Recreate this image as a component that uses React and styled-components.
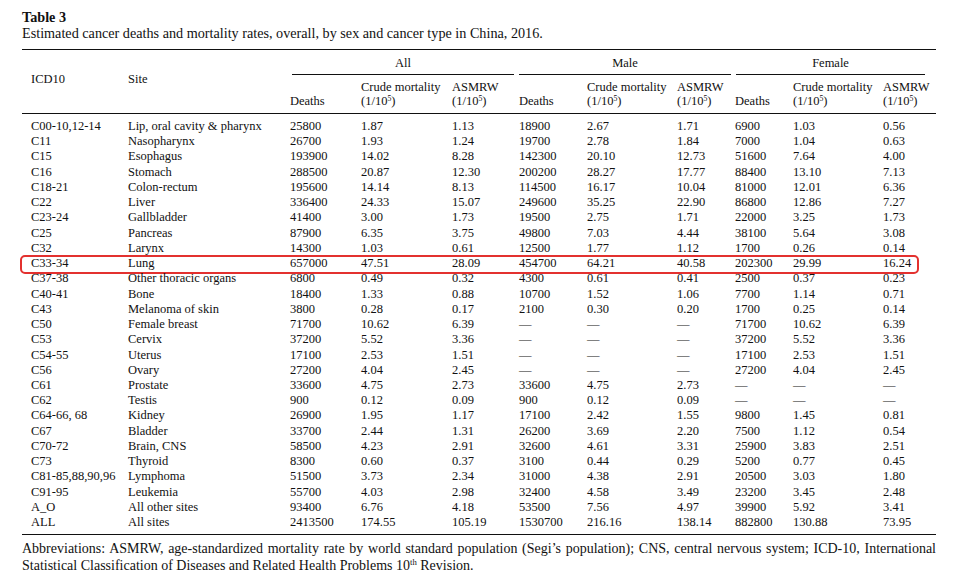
import React from "react";
import styled, { createGlobalStyle } from "styled-components";

const GlobalStyle = createGlobalStyle`
  html, body {
    margin: 0;
    padding: 0;
    background: #fff;
  }
  body {
    font-family: "Liberation Serif", "Times New Roman", serif;
    color: #111;
  }
`;

const rows = [
  ["C00-10,12-14", "Lip, oral cavity & pharynx", "25800", "1.87", "1.13", "18900", "2.67", "1.71", "6900", "1.03", "0.56"],
  ["C11", "Nasopharynx", "26700", "1.93", "1.24", "19700", "2.78", "1.84", "7000", "1.04", "0.63"],
  ["C15", "Esophagus", "193900", "14.02", "8.28", "142300", "20.10", "12.73", "51600", "7.64", "4.00"],
  ["C16", "Stomach", "288500", "20.87", "12.30", "200200", "28.27", "17.77", "88400", "13.10", "7.13"],
  ["C18-21", "Colon-rectum", "195600", "14.14", "8.13", "114500", "16.17", "10.04", "81000", "12.01", "6.36"],
  ["C22", "Liver", "336400", "24.33", "15.07", "249600", "35.25", "22.90", "86800", "12.86", "7.27"],
  ["C23-24", "Gallbladder", "41400", "3.00", "1.73", "19500", "2.75", "1.71", "22000", "3.25", "1.73"],
  ["C25", "Pancreas", "87900", "6.35", "3.75", "49800", "7.03", "4.44", "38100", "5.64", "3.08"],
  ["C32", "Larynx", "14300", "1.03", "0.61", "12500", "1.77", "1.12", "1700", "0.26", "0.14"],
  ["C33-34", "Lung", "657000", "47.51", "28.09", "454700", "64.21", "40.58", "202300", "29.99", "16.24"],
  ["C37-38", "Other thoracic organs", "6800", "0.49", "0.32", "4300", "0.61", "0.41", "2500", "0.37", "0.23"],
  ["C40-41", "Bone", "18400", "1.33", "0.88", "10700", "1.52", "1.06", "7700", "1.14", "0.71"],
  ["C43", "Melanoma of skin", "3800", "0.28", "0.17", "2100", "0.30", "0.20", "1700", "0.25", "0.14"],
  ["C50", "Female breast", "71700", "10.62", "6.39", "—", "—", "—", "71700", "10.62", "6.39"],
  ["C53", "Cervix", "37200", "5.52", "3.36", "—", "—", "—", "37200", "5.52", "3.36"],
  ["C54-55", "Uterus", "17100", "2.53", "1.51", "—", "—", "—", "17100", "2.53", "1.51"],
  ["C56", "Ovary", "27200", "4.04", "2.45", "—", "—", "—", "27200", "4.04", "2.45"],
  ["C61", "Prostate", "33600", "4.75", "2.73", "33600", "4.75", "2.73", "—", "—", "—"],
  ["C62", "Testis", "900", "0.12", "0.09", "900", "0.12", "0.09", "—", "—", "—"],
  ["C64-66, 68", "Kidney", "26900", "1.95", "1.17", "17100", "2.42", "1.55", "9800", "1.45", "0.81"],
  ["C67", "Bladder", "33700", "2.44", "1.31", "26200", "3.69", "2.20", "7500", "1.12", "0.54"],
  ["C70-72", "Brain, CNS", "58500", "4.23", "2.91", "32600", "4.61", "3.31", "25900", "3.83", "2.51"],
  ["C73", "Thyroid", "8300", "0.60", "0.37", "3100", "0.44", "0.29", "5200", "0.77", "0.45"],
  ["C81-85,88,90,96", "Lymphoma", "51500", "3.73", "2.34", "31000", "4.38", "2.91", "20500", "3.03", "1.80"],
  ["C91-95", "Leukemia", "55700", "4.03", "2.98", "32400", "4.58", "3.49", "23200", "3.45", "2.48"],
  ["A_O", "All other sites", "93400", "6.76", "4.18", "53500", "7.56", "4.97", "39900", "5.92", "3.41"],
  ["ALL", "All sites", "2413500", "174.55", "105.19", "1530700", "216.16", "138.14", "882800", "130.88", "73.95"],
];

const colWidths = [106, 162, 71, 91, 67, 68, 90, 58, 58, 90, 53];

const groups = [
  { label: "All", l: 2, r: 5 },
  { label: "Male", l: 0, r: 4 },
  { label: "Female", l: 1, r: 11 },
];

export default function App() {
  return (
    <>
      <GlobalStyle />
      <Page>
        <Title>Table 3</Title>
        <Caption>
          Estimated cancer deaths and mortality rates, overall, by sex and cancer type in China, 2016.
        </Caption>
        <Table>
          <colgroup>
            {colWidths.map((w, i) => (
              <col key={i} style={{ width: w }} />
            ))}
          </colgroup>
          <thead>
            <tr>
              <StubHead rowSpan={2} $first>ICD10</StubHead>
              <StubHead rowSpan={2}>Site</StubHead>
              {groups.map((g) => (
                <GroupHead key={g.label} colSpan={3}>
                  <GroupRule $l={g.l} $r={g.r}>{g.label}</GroupRule>
                </GroupHead>
              ))}
            </tr>
            <tr>
              {groups.map((g) => (
                <React.Fragment key={g.label}>
                  <ColHead>Deaths</ColHead>
                  <ColHead>
                    Crude mortality
                    <br />
                    (1/10<Sup>5</Sup>)
                  </ColHead>
                  <ColHead>
                    ASMRW
                    <br />
                    (1/10<Sup>5</Sup>)
                  </ColHead>
                </React.Fragment>
              ))}
            </tr>
          </thead>
          <tbody>
            {rows.map((r, ri) => (
              <Row key={r[0]} $top={ri === 0} $bottom={ri === rows.length - 1}>
                {r.map((c, ci) => (
                  <Cell key={ci} $first={ci === 0}>
                    {ci === 0 && r[1] === "Lung" && <Highlight />}
                    {c}
                  </Cell>
                ))}
              </Row>
            ))}
          </tbody>
        </Table>
        <Footnote>
          <FootLine $justify>
            Abbreviations: ASMRW, age-standardized mortality rate by world standard population (Segi’s
            population); CNS, central nervous system; ICD-10, International
          </FootLine>
          <FootLine>
            Statistical Classification of Diseases and Related Health Problems 10<Sup>th</Sup> Revision.
          </FootLine>
        </Footnote>
      </Page>
    </>
  );
}

const Page = styled.div`
  width: 914px;
  padding: 9px 0 0 22px;
`;

const Title = styled.div`
  font-size: 14.2px;
  font-weight: bold;
  line-height: 16px;
`;

const Caption = styled.div`
  font-size: 14.2px;
  line-height: 16px;
  margin-bottom: 8px;
`;

const Table = styled.table`
  width: 914px;
  table-layout: fixed;
  border-collapse: separate;
  border-spacing: 0;
  border-top: 1px solid #111;
  border-bottom: 1px solid #111;
  font-size: 12.5px;
`;

const StubHead = styled.th`
  font-weight: normal;
  text-align: left;
  vertical-align: middle;
  padding: 0 0 6px ${(p) => (p.$first ? "9px" : "0")};
  border-bottom: 1px solid #111;
  line-height: 14px;
`;

const GroupHead = styled.th`
  font-weight: normal;
  padding: 6px 0 0;
  line-height: 14px;
`;

const GroupRule = styled.div`
  text-align: center;
  margin: 0 ${(p) => p.$r}px 0 ${(p) => p.$l}px;
  padding-bottom: 4px;
  border-bottom: 1px solid #111;
`;

const ColHead = styled.th`
  font-weight: normal;
  text-align: left;
  vertical-align: bottom;
  white-space: nowrap;
  line-height: 13.5px;
  padding: 6px 0 5px;
  border-bottom: 1px solid #111;
`;

const Sup = styled.sup`
  font-size: 0.62em;
  line-height: 0;
  vertical-align: 0.55em;
`;

const Row = styled.tr`
  td {
    padding-top: ${(p) => (p.$top ? "5px" : "0")};
    padding-bottom: ${(p) => (p.$bottom ? "4px" : "0")};
  }
`;

const Cell = styled.td`
  position: relative;
  line-height: 15.23px;
  white-space: nowrap;
  padding-left: ${(p) => (p.$first ? "9px" : "0")};
`;

const Highlight = styled.span`
  position: absolute;
  left: -2px;
  top: -1.5px;
  width: 899px;
  height: 19px;
  box-sizing: border-box;
  border: 2px solid #e3312f;
  border-radius: 5px;
  pointer-events: none;
`;

const Footnote = styled.div`
  margin-top: 5px;
  font-size: 14px;
  line-height: 17px;
`;

const FootLine = styled.div`
  white-space: nowrap;
  text-align: ${(p) => (p.$justify ? "justify" : "left")};
  text-align-last: ${(p) => (p.$justify ? "justify" : "auto")};
`;
